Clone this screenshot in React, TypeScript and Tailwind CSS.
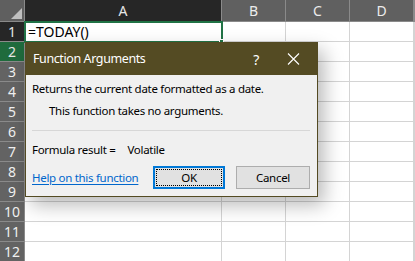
import React from "react";

const cols = [
  { name: "A", w: 197, active: true },
  { name: "B", w: 64 },
  { name: "C", w: 64 },
  { name: "D", w: 64 },
  { name: "", w: 1 },
];

const rows = Array.from({ length: 12 }, (_, i) => i + 1);

export default function App() {
  return (
    <div
      className="relative w-[415px] h-[261px] overflow-hidden bg-white"
      style={{ fontFamily: '"Noto Sans", "Open Sans", Arial, sans-serif' }}
    >
      {/* Header row */}
      <div className="flex h-[22px]">
        <div className="relative w-[25px] h-[22px] bg-[#5f5f5f] border-r border-b border-[#8a8a8a]">
          <div className="absolute right-[2px] bottom-[2px] w-0 h-0 border-l-[11px] border-l-transparent border-b-[11px] border-b-[#bfbfbf]" />
        </div>
        {cols.map((c, i) => (
          <div
            key={i}
            className={`h-[22px] flex items-center justify-center text-[14px] border-r border-b ${
              c.active
                ? "bg-[#262626] text-[#e6e6e6] border-[#8a8a8a]"
                : "bg-[#606060] text-[#ececec] border-[#8a8a8a]"
            }`}
            style={{ width: c.w, flex: "none" }}
          >
            {c.name}
          </div>
        ))}
      </div>
      {/* Rows */}
      {rows.map((r) => (
        <div key={r} className="flex h-[20px]">
          <div
            className={`w-[25px] h-[20px] flex items-center justify-center text-[14px] border-r border-b border-[#8a8a8a] ${
              r === 1
                ? "bg-[#262626] text-[#e6e6e6]"
                : r === 2
                ? "bg-[#1f6b3d] text-[#e6e6e6]"
                : "bg-[#636363] text-[#f0f0f0]"
            }`}
          >
            {r}
          </div>
          {cols.map((c, i) => (
            <div
              key={i}
              className="h-[20px] border-r border-b border-[#d4d4d4] flex items-center text-[14px] text-black"
              style={{ width: c.w, flex: "none" }}
            >
              {r === 1 && i === 0 ? <span className="pl-[3px] leading-none">=TODAY()</span> : null}
            </div>
          ))}
        </div>
      ))}

      {/* Selection box */}
      <div className="absolute left-[24px] top-[21px] w-[199px] h-[22px] border-2 border-[#217346] pointer-events-none" />
      <div className="absolute left-[219px] top-[39px] w-[5px] h-[5px] bg-[#217346] border border-white" />

      {/* Dialog */}
      <div className="absolute left-[25px] top-[42px] w-[293px] h-[155px] bg-[#f0f0f0] border border-[#534a22] flex flex-col shadow-[6px_8px_18px_rgba(0,0,0,0.28)] text-[11.5px] tracking-[-0.3px] text-black">
        <div className="h-[32px] bg-[#544b23] flex items-center pl-[7px] text-white text-[12.5px] tracking-[-0.4px]">
          <span className="flex-1">Function Arguments</span>
          <span className="w-[30px] text-center text-[14px]">?</span>
          <svg width="46" height="32" viewBox="0 0 46 32" className="block">
            <path d="M17 10.5 L28 21.5 M28 10.5 L17 21.5" stroke="white" strokeWidth="1.1" />
          </svg>
        </div>
        <div className="flex flex-col px-[6px]">
          <div className="pt-[5px] h-[26px]">Returns the current date formatted as a date.</div>
          <div className="pl-[17px] h-[23px] pt-[1px]">This function takes no arguments.</div>
          <div className="h-px bg-[#d7d7d7] mt-[6px] mr-[1px]" />
          <div className="flex pt-[10px] h-[35px]">
            <span>Formula result =</span>
            <span className="pl-[12px]">Volatile</span>
          </div>
          <div className="flex items-center">
            <span className="text-[#0066cc] underline underline-offset-2 w-[121px]">Help on this function</span>
            <div className="w-[72px] h-[23px] border-2 border-[#0078d7] bg-[#e1e1e1] p-[1px]">
              <div className="w-full h-full border border-dotted border-black flex items-center justify-center">OK</div>
            </div>
            <div className="ml-[11px] w-[74px] h-[23px] border border-[#adadad] bg-[#e1e1e1] flex items-center justify-center">
              Cancel
            </div>
          </div>
        </div>
      </div>
    </div>
  );
}
